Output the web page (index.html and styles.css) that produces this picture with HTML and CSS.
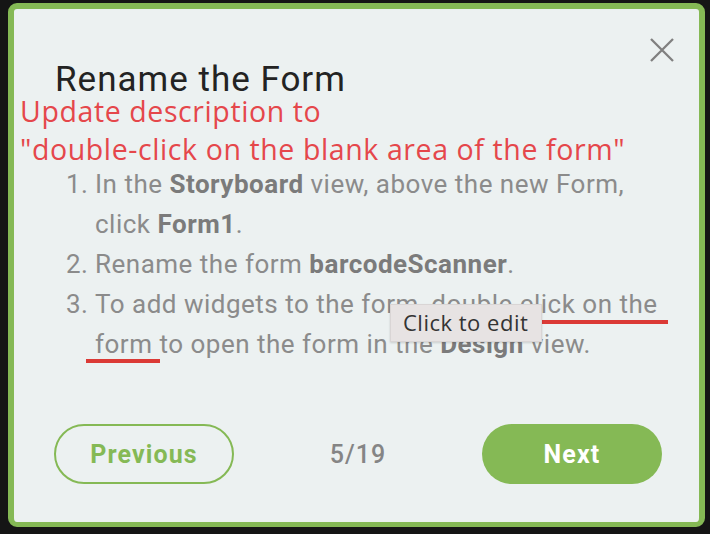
FILE: index.html
```html
<!DOCTYPE html>
<html lang="en">
<head>
<meta charset="utf-8">
<title>Rename the Form</title>
<link rel="stylesheet" href="styles.css">
</head>
<body>
<div class="panel">
  <button class="close" aria-label="Close">
    <svg width="26" height="26" viewBox="0 0 26 26"><path d="M2 2 L24 24 M24 2 L2 24" stroke="#808080" stroke-width="2.3" fill="none"/></svg>
  </button>
  <h1 class="title">Rename the Form</h1>
  <p class="note">Update description to<br>"double-click on the blank area of the form"</p>
  <ol class="steps">
    <li><span class="num">1.</span><span class="txt">In the <b>Storyboard</b> view, above the new Form, click <b>Form1</b>.</span></li>
    <li><span class="num">2.</span><span class="txt">Rename the form <b>barcodeScanner</b>.</span></li>
    <li><span class="num">3.</span><span class="txt">To add widgets to the form, double click on the form to open the form in the <b>Design</b> view.</span></li>
  </ol>
  <div class="footer">
    <button class="btn btn-outline">Previous</button>
    <span class="count">5/19</span>
    <button class="btn btn-fill">Next</button>
  </div>
  <span class="mark mark-a"></span>
  <span class="mark mark-b"></span>
  <div class="tip">Click to edit</div>
</div>
</body>
</html>
```
FILE: styles.css
```css
html, body {
  margin: 0;
  padding: 0;
  background: #151515;
}
body {
  width: 710px;
  height: 534px;
  overflow: hidden;
}
.panel {
  position: relative;
  box-sizing: border-box;
  width: 697px;
  height: 524px;
  margin: 3px 0 0 8px;
  border: 6px solid #85b955;
  border-bottom-width: 5px;
  border-radius: 9px;
  background: #ecf1f1;
  padding: 0 37px 0 40px;
  display: flex;
  flex-direction: column;
  font-family: Roboto, "Noto Sans", sans-serif;
}
.close {
  position: absolute;
  top: 28px;
  right: 24px;
  width: 26px;
  height: 26px;
  padding: 0;
  border: 0;
  background: none;
}
.close svg { display: block; }
.title {
  margin: 55px 0 0 1px;
  font-size: 35px;
  letter-spacing: 1px;
  line-height: 32px;
  font-weight: 400;
  color: #232323;
}
.note {
  margin: -4px 0 0 -34px;
  font-family: "Open Sans", sans-serif;
  font-size: 28.5px;
  letter-spacing: 0.6px;
  line-height: 38px;
  color: #e5474b;
}
.steps {
  list-style: none;
  margin: -4px 0 0 12px;
  padding: 0;
  font-size: 26px;
  letter-spacing: 0.5px;
  line-height: 40px;
  color: #8b8b8b;
}
.steps li {
  display: flex;
}
.steps .num {
  width: 29px;
  flex: none;
}
.steps .txt {
  width: 575px;
}
.steps b {
  font-weight: 700;
  color: #7b7b7b;
}
.footer {
  margin-top: auto;
  margin-bottom: 38px;
  display: flex;
  align-items: center;
  justify-content: space-between;
}
.btn {
  box-sizing: border-box;
  width: 180px;
  height: 60px;
  border-radius: 30px;
  font-family: Roboto, sans-serif;
  font-size: 25px;
  letter-spacing: 1.1px;
  font-weight: 700;
  padding: 0;
}
.btn-outline {
  border: 2px solid #85b955;
  background: transparent;
  color: #85b955;
}
.btn-fill {
  border: 0;
  background: #85b955;
  color: #ffffff;
}
.count {
  font-size: 25px;
  letter-spacing: 1px;
  font-weight: 500;
  color: #858585;
  margin-left: 0;
}
.mark {
  position: absolute;
  height: 4px;
  background: #db3a36;
}
.mark-a {
  left: 460px;
  top: 311px;
  width: 194px;
}
.mark-b {
  left: 72px;
  top: 350px;
  width: 74px;
}
.tip {
  position: absolute;
  left: 376px;
  top: 295px;
  width: 152px;
  height: 38px;
  box-sizing: border-box;
  padding-left: 12px;
  background: #e7e3e3;
  border: 1px solid #d9d5d5;
  box-shadow: 0 1px 2px rgba(0,0,0,0.15);
  font-family: "Open Sans", sans-serif;
  font-size: 22px;
  letter-spacing: 0.5px;
  line-height: 35px;
  color: #333333;
}
```
